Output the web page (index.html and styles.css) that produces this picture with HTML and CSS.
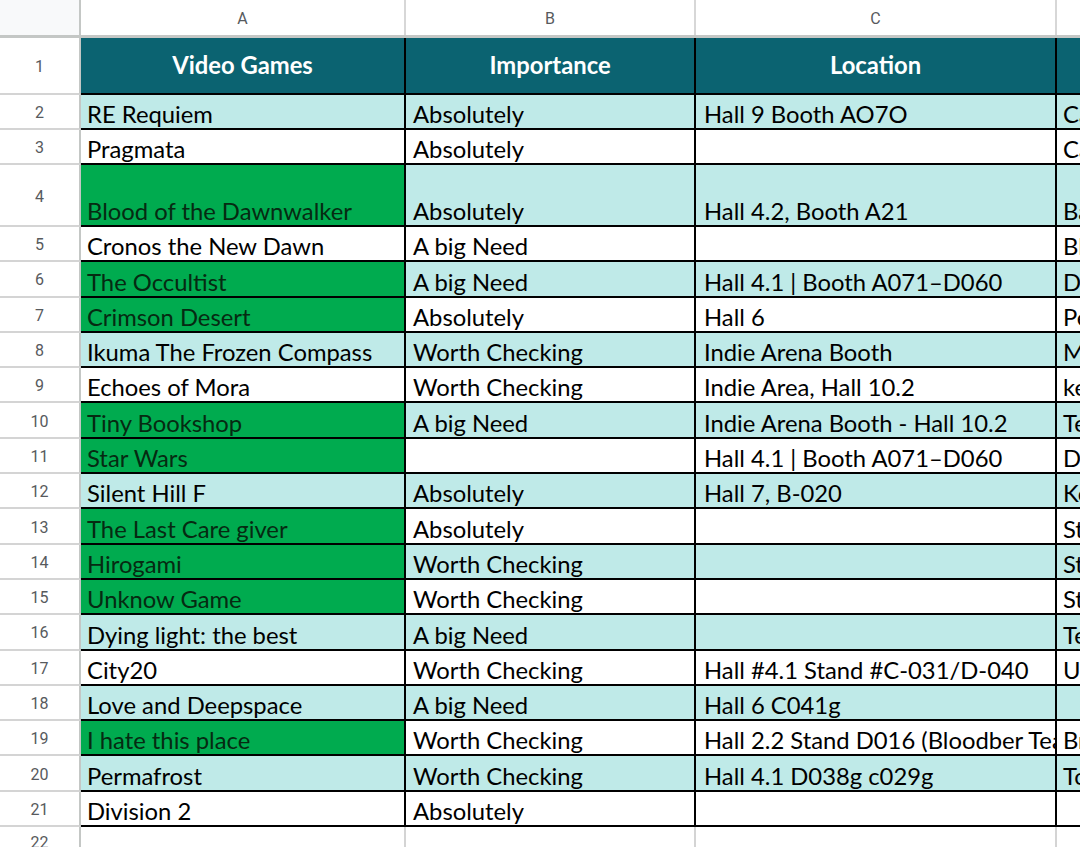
FILE: index.html
```html
<!DOCTYPE html>
<html lang="en">
<head>
<meta charset="utf-8">
<title>Video Games</title>
<link rel="stylesheet" href="styles.css">
</head>
<body>
<div class="sheet">
  <div class="colhead">
    <div class="corner"></div>
    <div class="ch ca">A</div>
    <div class="ch cb">B</div>
    <div class="ch cc">C</div>
    <div class="ch cd">D</div>
  </div>

  <div class="row r-head">
    <div class="rn">1</div>
    <div class="cell ca hd">Video Games</div>
    <div class="cell cb hd">Importance</div>
    <div class="cell cc hd">Location</div>
    <div class="cell cd hd"></div>
  </div>

  <div class="row band r-s"><div class="rn">2</div><div class="cell ca">RE Requiem</div><div class="cell cb">Absolutely</div><div class="cell cc">Hall 9 Booth AO7O</div><div class="cell cd">Capcom</div></div>
  <div class="row r-s"><div class="rn">3</div><div class="cell ca">Pragmata</div><div class="cell cb">Absolutely</div><div class="cell cc"></div><div class="cell cd">Capcom</div></div>
  <div class="row band r-tall"><div class="rn">4</div><div class="cell ca green">Blood of the Dawnwalker</div><div class="cell cb">Absolutely</div><div class="cell cc">Hall 4.2, Booth A21</div><div class="cell cd">Bandai Namco</div></div>
  <div class="row"><div class="rn">5</div><div class="cell ca">Cronos the New Dawn</div><div class="cell cb">A big Need</div><div class="cell cc"></div><div class="cell cd">Bloober Team</div></div>
  <div class="row band"><div class="rn">6</div><div class="cell ca green">The Occultist</div><div class="cell cb">A big Need</div><div class="cell cc">Hall 4.1 | Booth A071–D060</div><div class="cell cd">Daedalic</div></div>
  <div class="row"><div class="rn">7</div><div class="cell ca green">Crimson Desert</div><div class="cell cb">Absolutely</div><div class="cell cc">Hall 6</div><div class="cell cd">Pearl Abyss</div></div>
  <div class="row band"><div class="rn">8</div><div class="cell ca">Ikuma The Frozen Compass</div><div class="cell cb">Worth Checking</div><div class="cell cc">Indie Arena Booth</div><div class="cell cd">Mooneye</div></div>
  <div class="row"><div class="rn">9</div><div class="cell ca">Echoes of Mora</div><div class="cell cb">Worth Checking</div><div class="cell cc">Indie Area, Hall 10.2</div><div class="cell cd">kepler</div></div>
  <div class="row band"><div class="rn">10</div><div class="cell ca green">Tiny Bookshop</div><div class="cell cb">A big Need</div><div class="cell cc">Indie Arena Booth - Hall 10.2</div><div class="cell cd">Team</div></div>
  <div class="row"><div class="rn">11</div><div class="cell ca green">Star Wars</div><div class="cell cb"></div><div class="cell cc">Hall 4.1 | Booth A071–D060</div><div class="cell cd">Daedalic</div></div>
  <div class="row band"><div class="rn">12</div><div class="cell ca">Silent Hill F</div><div class="cell cb">Absolutely</div><div class="cell cc">Hall 7, B-020</div><div class="cell cd">Konami</div></div>
  <div class="row"><div class="rn">13</div><div class="cell ca green">The Last Care giver</div><div class="cell cb">Absolutely</div><div class="cell cc"></div><div class="cell cd">Steam</div></div>
  <div class="row band"><div class="rn">14</div><div class="cell ca green">Hirogami</div><div class="cell cb">Worth Checking</div><div class="cell cc"></div><div class="cell cd">Steam</div></div>
  <div class="row"><div class="rn">15</div><div class="cell ca green">Unknow Game</div><div class="cell cb">Worth Checking</div><div class="cell cc"></div><div class="cell cd">Steam</div></div>
  <div class="row band"><div class="rn">16</div><div class="cell ca">Dying light: the best</div><div class="cell cb">A big Need</div><div class="cell cc"></div><div class="cell cd">Techland</div></div>
  <div class="row"><div class="rn">17</div><div class="cell ca">City20</div><div class="cell cb">Worth Checking</div><div class="cell cc">Hall #4.1 Stand #C-031/D-040</div><div class="cell cd">Untold</div></div>
  <div class="row band"><div class="rn">18</div><div class="cell ca">Love and Deepspace</div><div class="cell cb">A big Need</div><div class="cell cc">Hall 6 C041g</div><div class="cell cd"></div></div>
  <div class="row"><div class="rn">19</div><div class="cell ca green">I hate this place</div><div class="cell cb">Worth Checking</div><div class="cell cc">Hall 2.2 Stand D016 (Bloodber Team)</div><div class="cell cd">Broken</div></div>
  <div class="row band"><div class="rn">20</div><div class="cell ca">Permafrost</div><div class="cell cb">Worth Checking</div><div class="cell cc">Hall 4.1 D038g c029g</div><div class="cell cd">Toplitz</div></div>
  <div class="row"><div class="rn">21</div><div class="cell ca">Division 2</div><div class="cell cb">Absolutely</div><div class="cell cc"></div><div class="cell cd"></div></div>

  <div class="row r-empty">
    <div class="rn">22</div>
    <div class="blank ca"></div>
    <div class="blank cb"></div>
    <div class="blank cc"></div>
    <div class="blank cd"></div>
  </div>
</div>
</body>
</html>
```

FILE: styles.css
```css
* { box-sizing: border-box; }

html, body {
  margin: 0;
  padding: 0;
  background: #ffffff;
  overflow: hidden;
}

.sheet {
  width: 1080px;
  height: 847px;
  overflow: hidden;
}

.colhead {
  display: flex;
  height: 38px;
  border-bottom: 3px solid #c4c7c5;
  width: 1200px;
}

.corner {
  width: 81px;
  flex: none;
  background: #f8f9fa;
  border-right: 2px solid #c4c7c5;
}

.ch {
  flex: none;
  display: flex;
  align-items: center;
  justify-content: center;
  font-family: Roboto, "Liberation Sans", Arial, sans-serif;
  font-size: 16px;
  color: #575a5d;
  border-right: 2px solid #d7d7d7;
  padding-top: 1px;
}

.ca { width: 325px; }
.cb { width: 290px; }
.cc { width: 361px; }
.cd { width: 240px; }

.row {
  display: flex;
  height: 35.3px;
  width: 1300px;
}

.r-head { height: 57px; }
.r-s { height: 35px; }
.r-tall { height: 62px; }
.r-empty { height: 30px; }

.rn {
  flex: none;
  width: 81px;
  display: flex;
  align-items: center;
  justify-content: center;
  font-family: Roboto, "Liberation Sans", Arial, sans-serif;
  font-size: 16px;
  color: #575a5d;
  border-right: 2px solid #c4c7c5;
  border-bottom: 2px solid #d4d4d4;
  padding-top: 2px;
}

.cell {
  flex: none;
  display: flex;
  align-items: flex-end;
  padding: 0 4px 0 6px;
  border-right: 2px solid #000;
  border-bottom: 2px solid #000;
  font-family: Lato, "Open Sans", sans-serif;
  font-size: 23.8px;
  line-height: 27px;
  color: #000;
  white-space: nowrap;
  overflow: hidden;
  background: #ffffff;
}

.cell.cb { padding-left: 7px; }
.cell.cc { padding-left: 8px; }

.band .cell { background: #bfeae8; }

.cell.green,
.band .cell.green {
  background: #00ab4f;
  color: #062a12;
}

.cell.hd {
  background: #0b6371;
  color: #ffffff;
  font-weight: 700;
  align-items: center;
  justify-content: center;
  padding: 0;
}

.blank {
  flex: none;
  border-right: 2px solid #d4d4d4;
}
```
